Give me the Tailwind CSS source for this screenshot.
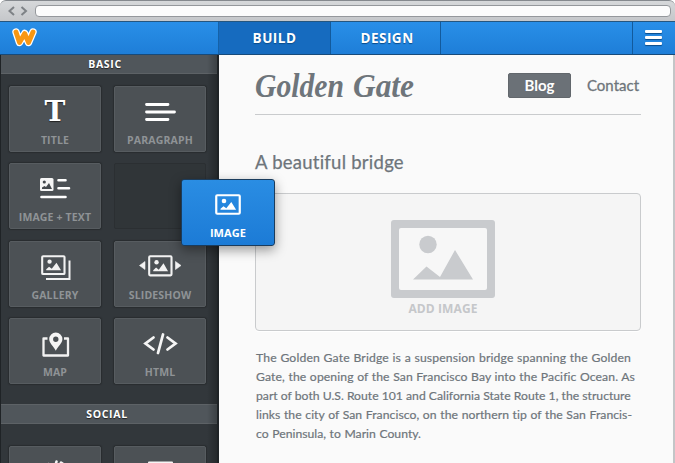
<!DOCTYPE html>
<html lang="en">
<head>
<meta charset="utf-8">
<title>Site builder</title>
<script src="https://cdn.jsdelivr.net/npm/@tailwindcss/browser@4"></script>
</head>
<body class="w-[675px] h-[463px] overflow-hidden bg-white font-['Open_Sans',sans-serif]">
<svg class="hidden">
  <defs>
    <g id="photo">
      <rect x="1.25" y="1.25" width="23.5" height="19.5" rx="1" fill="none" stroke="currentColor" stroke-width="2.2"/>
      <circle cx="9" cy="7.3" r="2.3" fill="currentColor"/>
      <path d="M5.5 16.5v-1l3-2.7 2.8 2.2 5-6.7 4.8 8.2z" fill="currentColor"/>
    </g>
  </defs>
</svg>
<div class="relative w-[675px] h-[463px] flex flex-col overflow-hidden">
  <!-- Browser chrome -->
  <div class="h-[21px] shrink-0 flex items-center bg-linear-to-b from-[#d6d8da] to-[#c5c7ca] border-t border-[#85898e] rounded-t-md pl-[8px] pr-[4px]">
    <svg class="w-[20px] h-[10px] shrink-0" viewBox="0 0 20 10" fill="none" stroke="#7e8286" stroke-width="2"><path d="M6 1L1.500 5 6 9M13.500 1L18 5l-4.500 4"/></svg>
    <div class="ml-[7px] flex-1 h-[12px] bg-[#fcfcfc] border border-[#95989c] rounded-[4px]"></div>
  </div>
  <!-- App bar -->
  <div class="h-[34px] shrink-0 flex border-y border-t-[#25567f] border-b-[#174a7a] bg-linear-to-b from-[#298fe8] to-[#1e7ed8] text-white font-bold text-[13.500px] tracking-[0.5px] [text-shadow:0_1px_1px_#0a4c8a]">
    <div class="w-[219px] h-full pl-[12px] pt-[6px] border-r border-[#1562a8]">
      <svg class="w-[26px] h-[20px]" viewBox="0 0 26 20" fill="none" stroke-linecap="round" stroke-linejoin="round">
        <path d="M4 4L7.500 14.500 12.700 5.500 16.500 14.500 21 4" stroke="#fff" stroke-width="7.400"/>
        <path d="M4 4L7.500 14.500 12.700 5.500 16.500 14.500 21 4" stroke="#f99712" stroke-width="4.900"/>
      </svg>
    </div>
    <div class="w-[111px] bg-[#166bbf] flex items-center justify-center">BUILD</div>
    <div class="w-[111px] border-x border-[#125a9c] flex items-center justify-center pl-[3px]">DESIGN</div>
    <div class="flex-1"></div>
    <div class="w-[43px] border-l border-[#125a9c] flex items-center pl-[12px] pb-[2px]">
      <div class="flex flex-col gap-[3px] w-[17px]">
        <div class="h-[3px] bg-white rounded-[1px] shadow-[0_1px_1px_#0a4c8a]"></div>
        <div class="h-[3px] bg-white rounded-[1px] shadow-[0_1px_1px_#0a4c8a]"></div>
        <div class="h-[3px] bg-white rounded-[1px] shadow-[0_1px_1px_#0a4c8a]"></div>
      </div>
    </div>
  </div>
  <div class="flex flex-1 min-h-0">
    <!-- Element palette -->
    <div class="relative w-[219px] shrink-0 bg-[#32373b] border-l border-r-2 border-[#1f2326] overflow-hidden text-[#8f9396] font-bold text-[10.500px] leading-[14px] tracking-[0.15px]">
      <div class="h-[19px] bg-[#50565b] border-b border-[#5d6266] text-white font-bold tracking-[0.7px] flex items-center justify-center pr-[8px] [text-shadow:0_1px_1px_#222]">BASIC</div>
      <div class="grid grid-cols-[92px_92px] auto-rows-[66px] gap-x-[13px] gap-y-[11.400px] pl-[8px] pt-[12px]">
        <div class="bg-[#4c5155] border border-[#575c60] rounded-[2px] shadow-[0_0_1px_1px_#292d30] flex flex-col items-center">
          <div class="h-[46px] pt-[10px] font-['DejaVu_Serif',serif] font-bold text-[28px] leading-[30px] tracking-normal text-white [text-shadow:0_1px_1px_#222]">T</div><div>TITLE</div>
        </div>
        <div class="bg-[#4c5155] border border-[#575c60] rounded-[2px] shadow-[0_0_1px_1px_#292d30] flex flex-col items-center">
          <svg class="h-[46px] w-[90px] shrink-0 text-white" viewBox="0 0 90 46" stroke="currentColor" stroke-width="2.800" stroke-linecap="round"><path d="M31.500 17.500H53M31.500 25H59.500M31.500 32.500H53"/></svg><div>PARAGRAPH</div>
        </div>
        <div class="bg-[#4c5155] border border-[#575c60] rounded-[2px] shadow-[0_0_1px_1px_#292d30] flex flex-col items-center">
          <svg class="h-[46px] w-[90px] shrink-0" viewBox="0 0 90 46"><rect x="30" y="14" width="13.500" height="13" rx="1.500" fill="#f5f5f5"/><circle cx="34.300" cy="18" r="1.600" fill="#44494d"/><path d="M32 25v-1.500l2.500-1.500 1.500 1 3-4 3 6z" fill="#44494d"/><path d="M48.500 16.200H55.500M48.500 24.200H59M31.500 33H55.500" stroke="#fff" stroke-width="2.600" stroke-linecap="round"/></svg><div>IMAGE + TEXT</div>
        </div>
        <div class="bg-[#303538] border border-[#2b2f32] rounded-[2px]"></div>
        <div class="bg-[#4c5155] border border-[#575c60] rounded-[2px] shadow-[0_0_1px_1px_#292d30] flex flex-col items-center">
          <svg class="h-[46px] w-[90px] shrink-0 text-[#f2f2f2]" viewBox="0 0 90 46"><use href="#photo" transform="translate(31 13) scale(.95 .92)"/><path d="M59.500 18.500V37H36" fill="none" stroke="currentColor" stroke-width="2"/></svg><div>GALLERY</div>
        </div>
        <div class="bg-[#4c5155] border border-[#575c60] rounded-[2px] shadow-[0_0_1px_1px_#292d30] flex flex-col items-center">
          <svg class="h-[46px] w-[90px] shrink-0 text-[#f2f2f2]" viewBox="0 0 90 46"><use href="#photo" transform="translate(33 13) scale(.95 .98)"/><path d="M30 19.500V27.500L24.500 23.500zM60.500 19.500V27.500L66 23.500z" fill="currentColor" stroke="currentColor" stroke-width=".6"/></svg><div>SLIDESHOW</div>
        </div>
        <div class="bg-[#4c5155] border border-[#575c60] rounded-[2px] shadow-[0_0_1px_1px_#292d30] flex flex-col items-center">
          <svg class="h-[46px] w-[90px] shrink-0" viewBox="0 0 90 46"><path d="M37.500 19.500H33.500V36.500H58V19.500H54" fill="none" stroke="#f2f2f2" stroke-width="2.300" stroke-linejoin="round"/><path fill-rule="evenodd" d="M45.800 13.500a6.600 6.600 0 0 1 6.600 6.600c0 4.200-4.200 7-6.600 11.700-2.400-4.700-6.600-7.500-6.600-11.700a6.600 6.600 0 0 1 6.600-6.600zm0 4a2.700 2.700 0 1 0 0 5.400 2.700 2.700 0 0 0 0-5.400z" fill="#f5f5f5"/></svg><div>MAP</div>
        </div>
        <div class="bg-[#4c5155] border border-[#575c60] rounded-[2px] shadow-[0_0_1px_1px_#292d30] flex flex-col items-center">
          <svg class="h-[46px] w-[90px] shrink-0" viewBox="0 0 90 46" fill="none" stroke="#f5f5f5" stroke-width="2.800" stroke-linecap="round"><path d="M38.500 18.500L30.500 24.500 38.500 30.500M48 15.500L43 34M52.500 18.500L60.500 24.500 52.500 30.500"/></svg><div>HTML</div>
        </div>
      </div>
      <div class="mt-[19.800px] h-[20px] bg-[#50565b] border-y border-[#5d6266] text-white font-bold tracking-[0.7px] flex items-center justify-center pr-[4px] [text-shadow:0_1px_1px_#222]">SOCIAL</div>
      <div class="grid grid-cols-[92px_92px] auto-rows-[66px] gap-x-[13px] pl-[8px] pt-[22px]">
        <div class="bg-[#4c5155] border border-[#575c60] rounded-[2px] shadow-[0_0_1px_1px_#292d30]"><svg class="h-[46px] w-[90px]" viewBox="0 0 90 46" fill="none" stroke="#f5f5f5" stroke-width="2.600" stroke-linecap="round"><path d="M38.500 17L30.500 23 38.500 29M46.500 14.500L41.500 33M51 15.500L60 22 52.500 29"/></svg></div>
        <div class="bg-[#4c5155] border border-[#575c60] rounded-[2px] shadow-[0_0_1px_1px_#292d30]"><svg class="h-[46px] w-[90px]" viewBox="0 0 90 46"><rect x="33" y="14.500" width="25" height="18" rx="1" fill="#f5f5f5"/></svg></div>
      </div>
      <div class="absolute right-0 top-0 w-[10px] h-full bg-linear-to-r from-black/0 to-black/25"></div>
    </div>
    <!-- Page canvas -->
    <div class="flex-1 bg-[#fafafa] border-r-2 border-[#c3c5c7] pl-[36px] text-[#6e757b] font-['Lato',sans-serif]">
      <div class="w-[386px] h-[60px] border-b border-[#c9cbcd] flex">
        <svg class="w-[170px] h-[59px] -ml-[2px] overflow-visible" viewBox="0 0 170 59"><g fill="#6e757b" font-family="Liberation Serif, serif" font-style="italic" font-weight="bold" font-size="33"><text x="2" y="42" textLength="89" lengthAdjust="spacingAndGlyphs">Golden</text><text x="100" y="42" textLength="61" lengthAdjust="spacingAndGlyphs">Gate</text></g></svg>
        <div class="flex-1 flex justify-end items-start pt-[18px] text-[15px] leading-[23px]">
          <div class="w-[63px] h-[25px] rounded-[2px] bg-[#6b7177] border border-[#62676c] text-white text-center font-bold">Blog</div>
          <div class="ml-[16px] w-[54px] leading-[24px] [-webkit-text-stroke:0.3px_#6e757b] [text-align-last:justify] whitespace-nowrap">Contact</div>
        </div>
      </div>
      <h1 class="mt-[35px] h-[24px] leading-[24px] text-[18.500px] tracking-[0.25px] [-webkit-text-stroke:0.25px_#6e757b]">A beautiful bridge</h1>
      <div class="mt-[19px] w-[386px] h-[138px] border border-[#c9cbcd] rounded-[4px] bg-[#f5f5f5] flex flex-col items-center pt-[26px] pr-[10px] shadow-[0_1px_0_#fff]">
        <svg class="w-[104px] h-[78px] shrink-0" viewBox="0 0 104 78"><rect width="104" height="78" rx="3" fill="#c9cbce"/><rect x="8" y="8" width="88" height="62" rx="2" fill="#f7f7f7"/><g fill="#c9cbce"><circle cx="37" cy="24.500" r="8.700"/><path d="M22 59.500L35.500 46.500 49 57 64 30 82 59.500z"/></g></svg>
        <div class="mt-[2px] font-['Open_Sans',sans-serif] font-bold text-[12px] leading-[18px] text-[#c5c7ca] tracking-[0.1px]">ADD IMAGE</div>
      </div>
      <div class="mt-[17px] ml-[1px] text-[12.200px] leading-[19px] tracking-[0.15px] whitespace-nowrap [text-align-last:justify] [-webkit-text-stroke:0.2px_#6e757b]">
        <div class="w-[375px]">The Golden Gate Bridge is a suspension bridge spanning the Golden</div>
        <div class="w-[379px] tracking-[0.1px]">Gate, the opening of the San Francisco Bay into the Pacific Ocean. As</div>
        <div class="w-[374px] tracking-normal">part of both U.S. Route 101 and California State Route 1, the structure</div>
        <div class="w-[376px] tracking-[0.05px]">links the city of San Francisco, on the northern tip of the San Francis-</div>
        <div class="w-[165px] tracking-normal">co Peninsula, to Marin County.</div>
      </div>
    </div>
  </div>
  <!-- Element being dragged -->
  <div class="absolute left-[181px] top-[179px] w-[94px] h-[67px] rounded-[3px] border border-[#1a3c5d] bg-linear-to-b from-[#2a8de3] to-[#1c7bd6] shadow-[0_4px_12px_rgba(0,0,0,0.4)] flex flex-col items-center text-white text-[11px] font-bold leading-[14px] pt-[14px]">
    <svg class="w-[26px] h-[21px] shrink-0" viewBox="0 0 26 22" preserveAspectRatio="none"><use href="#photo"/></svg>
    <div class="mt-[11px] tracking-[0.1px]">IMAGE</div>
  </div>
</div>
</body>
</html>
